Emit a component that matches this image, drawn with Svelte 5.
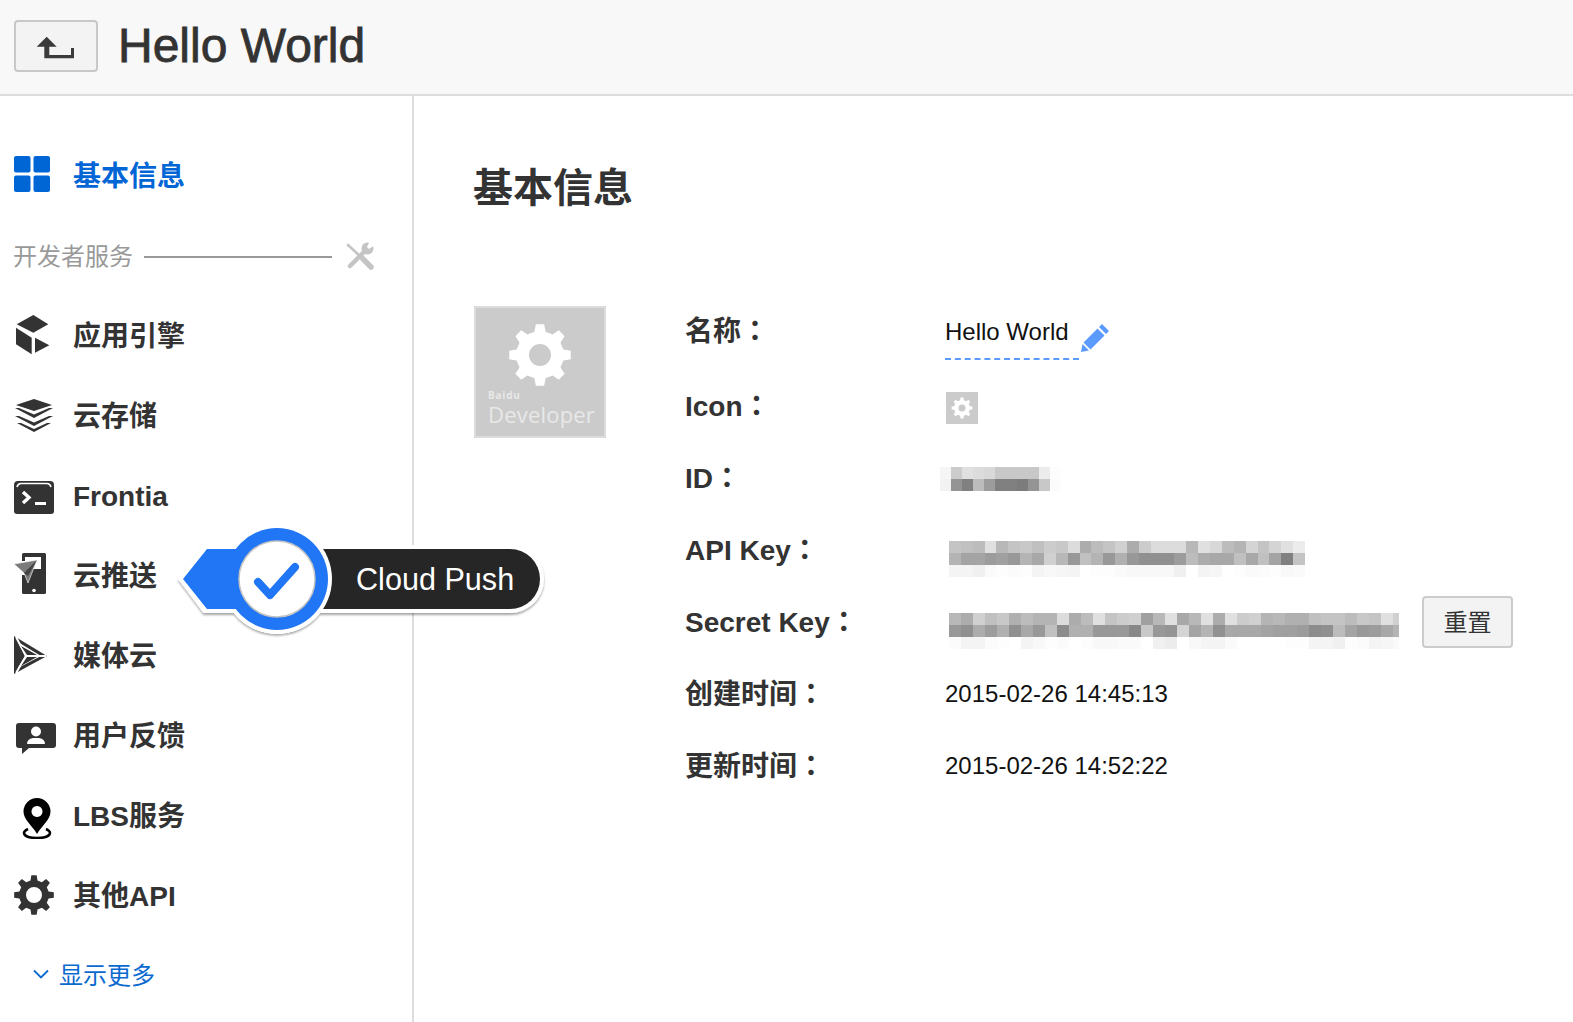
<script>
  const gear = (cx, cy, rOut, rIn, hole, teeth = 8) => {
    let d = "";
    const step = (Math.PI * 2) / teeth;
    for (let i = 0; i < teeth; i++) {
      const a = i * step;
      const pts = [
        [rIn, a - step * 0.3],
        [rOut, a - step * 0.17],
        [rOut, a + step * 0.17],
        [rIn, a + step * 0.3],
      ];
      for (const [r, t] of pts) {
        const x = (cx + r * Math.sin(t)).toFixed(2);
        const y = (cy - r * Math.cos(t)).toFixed(2);
        d += (d ? "L" : "M") + x + " " + y + " ";
      }
    }
    d += `Z M${cx - hole} ${cy} a${hole} ${hole} 0 1 0 ${hole * 2} 0 a${hole} ${hole} 0 1 0 ${-hole * 2} 0 Z`;
    return d;
  };

  const g = (s) => s.split(" ").map((v) => "#" + v + v + v);

  const idCells = g(
    "f6 cc e0 dc d8 c8 c8 c8 c8 ec fd " +
      "f2 94 80 bc 9c 80 80 7c 94 c8 fb"
  );

  const apiCells = g(
    "c4 c0 bc e0 b8 c4 c8 c0 cc c8 dc ac bc c4 d0 ac cc dc dc dc b8 e0 d8 bc b4 d4 c4 d4 e0 ec " +
      "b4 a4 a4 9c a0 98 b4 a8 d0 b8 98 c0 b4 98 b0 98 90 90 90 9c bc ac a8 a8 c0 a8 c0 a4 80 c4 " +
      "f4 f4 f0 fa fd fb fd f4 f8 f6 f4 ff fd fd fa f8 f8 f8 f8 f0 ff f4 f6 ff fd fa fb fd f8 fa"
  );

  const secretCells = g(
    "b8 ac d0 c0 c8 b0 bc b4 b4 dc ac bc e0 c4 cc d0 a0 b8 e0 a8 b8 e0 ac e0 cc d0 b4 b8 b0 b0 c0 c4 c4 bc c8 c4 e0 d0 " +
      "98 90 ac 9c b0 90 a8 98 c0 8c b0 b0 98 98 98 88 c8 98 94 d4 a4 b4 90 a8 a8 a8 a4 a0 a0 9c 8c 90 bc a4 98 9c a8 b4 " +
      "fb f4 f4 fb fd ff f4 f8 fd fb ff fd f8 f8 fa fa ff f0 ec ff f8 f4 f4 fa ff ff ff ff fd fd f4 f4 f0 fd fb f4 f6 fa"
  );
</script>

{#snippet mosaic(cells, cols, name)}
  <div class="mosaic {name}" style="grid-template-columns: repeat({cols}, 1fr)">
    {#each cells as c}
      <i style="background: {c}"></i>
    {/each}
  </div>
{/snippet}

<div class="page">
  <header>
    <button class="back" aria-label="back">
      <svg width="40" height="26" viewBox="0 0 40 26">
        <path d="M10.7 3.700 L20.700 13.700 H13.300 V22 H35 V15 H38 V25.300 H8.300 V13.700 H0.700 Z" fill="#3a3a3a" />
      </svg>
    </button>
    <h1>Hello World</h1>
  </header>

  <div class="body">
    <aside>
      <div class="item active">
        <svg class="ico" viewBox="0 0 46 46">
          <g fill="#0066d6">
            <rect x="0" y="3" width="16.5" height="16.5" rx="2" />
            <rect x="19.5" y="3" width="16.5" height="16.5" rx="2" />
            <rect x="0" y="22.5" width="16.5" height="16.5" rx="2" />
            <rect x="19.5" y="22.5" width="16.5" height="16.5" rx="2" />
          </g>
        </svg>
        <span>基本信息</span>
      </div>

      <div class="section">
        <span>开发者服务</span>
        <div class="rule"></div>
        <svg width="30" height="30" viewBox="0 0 30 30">
          <g fill="none" stroke="#c4c4c4" stroke-linecap="round">
            <path d="M3 4 L16 16" stroke-width="2.600" />
            <path d="M18 18 L26 26" stroke-width="5.500" />
            <path d="M5 25 L20 10" stroke-width="4.500" />
          </g>
          <circle cx="22.500" cy="7.500" r="6" fill="#c4c4c4" />
          <path d="M22 6 L25 0 H30 V4 L24 8 Z" fill="#fff" />
        </svg>
      </div>

      <div class="item">
        <svg class="ico" viewBox="0 0 46 46">
          <g fill="#333">
            <path d="M19.3 2 L34.3 11.3 L19.3 19.7 L2.7 11.3 Z" />
            <path d="M2 14.7 L17.7 24.7 V41.3 L2 31.3 Z" />
            <path d="M21 24.7 L35.3 32.3 L21 39.7 Z" />
          </g>
        </svg>
        <span>应用引擎</span>
      </div>

      <div class="item">
        <svg class="ico" viewBox="0 0 46 46">
          <path d="M20 6 L38 12 L20 18 L2 12 Z" fill="#333" />
          <path d="M1 15 H5 L20 21.500 L35 15 H39 L20 25 Z M1 23 H5 L20 29.500 L35 23 H39 L20 33 Z M3 30 H7 L20 36 L33 30 H37 L20 39 Z" fill="#333" />
        </svg>
        <span>云存储</span>
      </div>

      <div class="item">
        <svg class="ico" viewBox="0 0 46 46">
          <path d="M4 8 H36 a4 4 0 0 1 4 4 V38 a3 3 0 0 1 -3 3 H3 a3 3 0 0 1 -3 -3 V12 a4 4 0 0 1 4 -4 Z" fill="#333" />
          <path d="M3 14 Q4 10.500 7 10.500 H33 Q36 10.500 37 14" fill="none" stroke="#fff" stroke-width="1.600" />
          <path d="M9 19 L15 24.500 L9 30" fill="none" stroke="#fff" stroke-width="3.400" />
          <rect x="21" y="29" width="11" height="3" fill="#fff" />
        </svg>
        <span class="latin">Frontia</span>
      </div>

      <div class="item">
        <svg class="ico" viewBox="0 0 46 46">
          <rect x="8" y="0" width="24" height="41" rx="1.500" fill="#333" />
          <rect x="11" y="4" width="16" height="12" fill="#fff" />
          <rect x="6" y="8" width="5" height="14" fill="#fff" />
          <circle cx="20" cy="37.500" r="1.800" fill="#fff" />
          <path d="M0 11 L23 7 L14 30 L10 20 Z" fill="#7b7b7b" stroke="#fff" stroke-width="0.600" />
          <path d="M10 20 L23 7 L14 23 Z" fill="#444" />
        </svg>
        <span>云推送</span>
      </div>

      <div class="item">
        <svg class="ico" viewBox="0 0 46 46">
          <path d="M0 3 L33 23 L0 41 Z" fill="#333" />
          <path d="M2 4 L12 23 L2 40 M12 23 L32 23" fill="none" stroke="#fff" stroke-width="2" />
          <path d="M4 9 L27 23 L4 35 L11 23 Z" fill="#fff" />
          <path d="M7 13 L23 22 H13 Z M7 33 L23 24 H13 Z" fill="#333" />
        </svg>
        <span>媒体云</span>
      </div>

      <div class="item">
        <svg class="ico" viewBox="0 0 46 46">
          <path d="M5 10 H39 a3 3 0 0 1 3 3 V32 a3 3 0 0 1 -3 3 H15 L8 41 V35 H5 a3 3 0 0 1 -3 -3 V13 a3 3 0 0 1 3 -3 Z" fill="#333" />
          <circle cx="22" cy="18.500" r="5" fill="#fff" />
          <path d="M13 31 Q13 26 19 25 H25 Q31 26 31 31 Z" fill="#fff" />
        </svg>
        <span>用户反馈</span>
      </div>

      <div class="item">
        <svg class="ico" viewBox="0 0 46 46">
          <path d="M23 5 a13.500 13.500 0 0 1 13.500 13.500 C36.500 27 28 32 23 41 C18 32 9.500 27 9.500 18.500 A13.500 13.500 0 0 1 23 5 Z M23 13 a5.500 5.500 0 1 0 0.010 0 Z" fill="#000" fill-rule="evenodd" />
          <path d="M14 36 C7 39 9 45 23 45 C37 45 39 39 32 36" fill="none" stroke="#000" stroke-width="2.600" />
        </svg>
        <span>LBS服务</span>
      </div>

      <div class="item">
        <svg class="ico" viewBox="0 0 46 46">
          <path d={gear(20, 22, 20, 15, 8)} fill="#333" fill-rule="evenodd" />
        </svg>
        <span>其他API</span>
      </div>

      <div class="more">
        <svg width="16" height="10" viewBox="0 0 16 10">
          <path d="M1 1.500 L8 8.500 L15 1.500" fill="none" stroke="#0b6ad0" stroke-width="1.800" />
        </svg>
        <span>显示更多</span>
      </div>
    </aside>

    <main>
      <h2>基本信息</h2>
      <div class="detail">
        <div class="logo">
          <svg width="70" height="70" viewBox="0 0 70 70">
            <path d={gear(35, 35, 31, 24, 11)} fill="#fff" fill-rule="evenodd" />
          </svg>
          <small>Baidu</small>
          <span>Developer</span>
        </div>

        <div class="info">
          <div class="row first">
            <div class="key">名称<span class="colon">：</span></div>
            <div class="val name">
              <span class="editable">Hello World</span>
              <svg width="28" height="28" viewBox="0 0 28 28">
                <path d="M21 0 L28 7 L25 10 L18 3 Z M16.500 4.500 L23.500 11.500 L9.500 25.500 L2.500 18.500 Z M1.500 20 L8 26.500 L0 28 Z" fill="#5b9bff" />
              </svg>
            </div>
          </div>
          <div class="row">
            <div class="key">Icon<span class="colon">：</span></div>
            <div class="val">
              <div class="thumb">
                <svg width="22" height="22" viewBox="0 0 22 22">
                  <path d={gear(11, 11, 10.500, 8, 3.500)} fill="#fff" fill-rule="evenodd" />
                </svg>
              </div>
            </div>
          </div>
          <div class="row">
            <div class="key">ID<span class="colon">：</span></div>
            <div class="val">{@render mosaic(idCells, 11, "small")}</div>
          </div>
          <div class="row">
            <div class="key">API Key<span class="colon">：</span></div>
            <div class="val">{@render mosaic(apiCells, 30, "big api")}</div>
          </div>
          <div class="row">
            <div class="key">Secret Key<span class="colon">：</span></div>
            <div class="val">
              {@render mosaic(secretCells, 38, "big secret")}
              <button class="reset">重置</button>
            </div>
          </div>
          <div class="row">
            <div class="key">创建时间<span class="colon">：</span></div>
            <div class="val">2015-02-26 14:45:13</div>
          </div>
          <div class="row">
            <div class="key">更新时间<span class="colon">：</span></div>
            <div class="val">2015-02-26 14:52:22</div>
          </div>
        </div>
      </div>
    </main>
  </div>

  <!-- callout over the sidebar border -->
  <svg class="callout" width="400" height="130" viewBox="0 0 400 130">
    <defs>
      <filter id="soft" x="-5%" y="-10%" width="110%" height="125%">
        <feDropShadow dx="0" dy="2" stdDeviation="1.200" flood-color="#000" flood-opacity="0.35" />
      </filter>
    </defs>
    <path
      filter="url(#soft)"
      d="M3 59 L28.500 25 H59 A55 55 0 0 1 145 25 H335 A34 34 0 0 1 335 93 H145 A55 55 0 0 1 59 93 H28.500 Z"
      fill="#fff"
    />
    <path d="M126 29 H335 A30 30 0 0 1 335 89 H126 Z" fill="rgba(0,0,0,0.85)" />
    <circle cx="102" cy="59" r="55" fill="#fff" />
    <path d="M8 59 L32 29 H80 V89 H32 Z" fill="#2176f5" />
    <circle cx="102" cy="59" r="51" fill="#2176f5" />
    <circle cx="102" cy="59" r="38" fill="#fff" stroke="#c4c4c4" stroke-width="1.500" />
    <path d="M83 62 L95 75 L120 47" fill="none" stroke="#2176f5" stroke-width="8" stroke-linecap="round" stroke-linejoin="round" />
    <text x="181" y="70" class="callout-text">Cloud Push</text>
  </svg>
</div>

<style>
  :global(body) {
    margin: 0;
  }

  * {
    box-sizing: border-box;
  }

  .page {
    position: relative;
    width: 1573px;
    height: 1022px;
    overflow: hidden;
    background: #fff;
    color: #333;
    font-family: "Liberation Sans", "Noto Sans CJK SC", sans-serif;
  }

  header {
    height: 96px;
    display: flex;
    align-items: center;
    gap: 20px;
    padding: 0 14px 2px;
    background: #f8f8f8;
    border-bottom: 2px solid #ddd;
  }

  .back {
    width: 84px;
    height: 52px;
    display: flex;
    align-items: center;
    justify-content: center;
    padding: 0;
    background: #f3f3f3;
    border: 2px solid #c8c8c8;
    border-radius: 4px;
  }

  h1 {
    margin: -2px 0 0;
    font-size: 48px;
    font-weight: 400;
    color: #333;
    -webkit-text-stroke: 0.8px #333;
  }

  .body {
    display: flex;
    height: 926px;
  }

  aside {
    width: 414px;
    padding: 40px 0 0 14px;
    border-right: 2px solid #ddd;
  }

  .item {
    height: 80px;
    display: flex;
    align-items: center;
    gap: 13px;
    font-size: 28px;
    font-weight: 700;
    color: #333;
  }

  .item span {
    padding-bottom: 4px;
  }

  .item span.latin {
    padding: 2px 0 0;
  }

  .item.active {
    color: #0066d6;
  }

  .ico {
    width: 46px;
    height: 46px;
    flex: none;
  }

  .section {
    height: 80px;
    display: flex;
    align-items: center;
    margin-left: -1px;
    font-size: 24px;
    color: #999;
  }

  .section span {
    padding-bottom: 3px;
  }

  .rule {
    width: 188px;
    height: 2px;
    margin: 2px 13px 0 11px;
    background: #999;
  }

  .more {
    height: 76px;
    display: flex;
    align-items: center;
    gap: 10px;
    padding-left: 19px;
    font-size: 24px;
    color: #0b6ad0;
  }

  .more span {
    padding-bottom: 2px;
  }

  main {
    flex: 1;
    padding: 62px 0 0 60px;
  }

  h2 {
    margin: 0 0 88px -1px;
    font-size: 40px;
    line-height: 60px;
    font-weight: 700;
    color: #333;
  }

  .detail {
    display: flex;
    align-items: flex-start;
  }

  .logo {
    width: 132px;
    height: 132px;
    flex: none;
    display: flex;
    flex-direction: column;
    padding: 12px 0 0 12px;
    background: #cbcbcb;
    border: 2px solid #dcdcdc;
    color: #e8e8e8;
    font-family: "Open Sans", sans-serif;
  }

  .logo svg {
    align-self: center;
    margin-left: -12px;
  }

  .logo small {
    font-size: 10px;
    font-weight: 700;
    letter-spacing: 0.8px;
    line-height: 10px;
    margin-bottom: 2px;
  }

  .logo span {
    font-size: 22px;
    line-height: 24px;
    letter-spacing: 0.2px;
  }

  .info {
    margin: -11px 0 0 79px;
  }

  .row {
    height: 72px;
    display: flex;
    align-items: center;
  }

  .row.first {
    margin-bottom: 3px;
  }

  .key {
    width: 260px;
    flex: none;
    padding-bottom: 4px;
    font-size: 28px;
    font-weight: 700;
    color: #333;
  }

  .colon {
    font-family: "Noto Sans CJK TC", sans-serif;
  }

  .val {
    display: flex;
    align-items: center;
    font-size: 24px;
    color: #111;
  }

  .name {
    margin-top: 16px;
    align-items: flex-end;
  }

  .editable {
    width: 134px;
    padding-bottom: 12px;
    border-bottom: 2px dashed #5b9bff;
    white-space: nowrap;
  }

  .name svg {
    margin: 0 0 8px 2px;
  }

  .thumb {
    width: 32px;
    height: 32px;
    margin: 4px 0 0 1px;
    display: flex;
    align-items: center;
    justify-content: center;
    background: #cbcbcb;
  }

  .mosaic {
    display: grid;
    flex: none;
    overflow: hidden;
    filter: blur(0.4px);
  }

  .mosaic i {
    display: block;
  }

  .small {
    width: 121px;
    margin: 2px 0 0 -5px;
    grid-auto-rows: 12px;
  }

  .big {
    margin: 18px 0 0 4px;
    grid-auto-rows: 12px;
  }

  .api {
    width: 356px;
  }

  .secret {
    width: 456px;
    clip-path: inset(0 6px 0 0);
  }

  .reset {
    width: 91px;
    height: 52px;
    margin-left: 17px;
    padding: 0 0 4px 0;
    background: #f3f3f3;
    border: 2px solid #ccc;
    border-radius: 4px;
    font-family: "Liberation Sans", "Noto Sans CJK SC", sans-serif;
    font-size: 24px;
    color: #333;
  }

  .callout {
    position: absolute;
    left: 175px;
    top: 520px;
  }

  .callout-text {
    font-size: 30.6px;
    fill: #fff;
    font-family: "Liberation Sans", sans-serif;
  }
</style>
